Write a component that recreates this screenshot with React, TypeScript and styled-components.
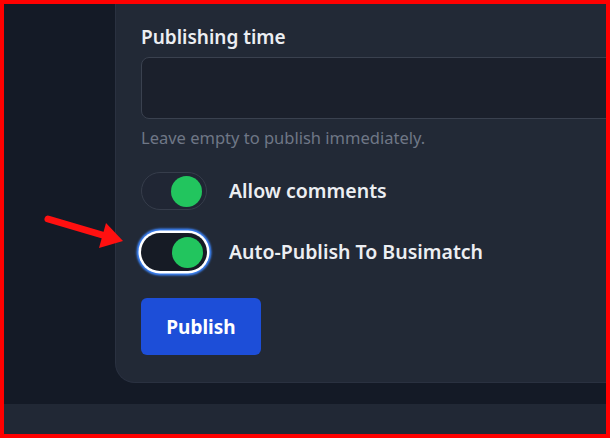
import React from "react";
import styled, { createGlobalStyle } from "styled-components";

const Global = createGlobalStyle`
  html, body { margin: 0; padding: 0; background: #141a26; }
  * { box-sizing: border-box; }
`;

const Frame = styled.div`
  position: relative;
  width: 610px;
  height: 438px;
  border: 4px solid #ff0000;
  background: #141a26;
  display: flex;
  flex-direction: column;
  overflow: hidden;
  font-family: "Noto Sans", "Open Sans", sans-serif;
`;

const Main = styled.div`
  flex: 1;
  display: flex;
  padding-left: 111px;
  padding-bottom: 21px;
  min-height: 0;
`;

const Card = styled.section`
  flex: 1;
  margin-right: -40px;
  background: #222936;
  border: 1px solid #2a3140;
  border-top: none;
  border-radius: 0 0 0 20px;
  padding: 21px 0 24px 25px;
  display: flex;
  flex-direction: column;
`;

const Label = styled.label`
  color: #eceef2;
  font-size: 19px;
  font-weight: 600;
  line-height: 24px;
`;

const Input = styled.input`
  margin-top: 8px;
  height: 62px;
  width: 100%;
  background: #1b202c;
  border: 1px solid #3a414f;
  border-radius: 8px;
  outline: none;
`;

const Help = styled.p`
  margin: 7px 0 0;
  color: #6f7786;
  font-size: 16.5px;
  line-height: 24px;
`;

const ToggleRow = styled.div<{ $top: number }>`
  margin-top: ${(p) => p.$top}px;
  display: flex;
  align-items: center;
  gap: 22px;
`;

const Track = styled.span<{ $focused?: boolean }>`
  width: 66px;
  height: 38px;
  border-radius: 19px;
  display: flex;
  align-items: center;
  justify-content: flex-end;
  padding-right: 4px;
  flex-shrink: 0;
  background: ${(p) => (p.$focused ? "#161b25" : "#202634")};
  border: ${(p) => (p.$focused ? "none" : "1px solid #363d4b")};
  box-shadow: ${(p) =>
    p.$focused
      ? "0 0 0 2.5px #ffffff, 0 0 2px 4.5px #3b82f6"
      : "none"};
`;

const Knob = styled.span`
  width: 31px;
  height: 31px;
  border-radius: 50%;
  background: #22c55e;
`;

const ToggleText = styled.span`
  color: #eceef2;
  font-size: 19.5px;
  font-weight: 600;
  line-height: 24px;
`;

const PublishButton = styled.button`
  margin-top: 27px;
  width: 120px;
  height: 57px;
  border: none;
  border-radius: 6px;
  background: #1d4ed8;
  color: #ffffff;
  font-family: inherit;
  font-size: 19px;
  font-weight: 700;
`;

const Footer = styled.div`
  height: 30px;
  background: #212835;
`;

const Arrow = styled.svg`
  position: absolute;
  left: 0;
  top: 0;
  pointer-events: none;
`;

export default function App() {
  return (
    <>
      <Global />
      <Frame>
        <Main>
          <Card>
            <Label>Publishing time</Label>
            <Input />
            <Help>Leave empty to publish immediately.</Help>
            <ToggleRow $top={22}>
              <Track>
                <Knob />
              </Track>
              <ToggleText>Allow comments</ToggleText>
            </ToggleRow>
            <ToggleRow $top={23}>
              <Track $focused>
                <Knob />
              </Track>
              <ToggleText>Auto-Publish To Busimatch</ToggleText>
            </ToggleRow>
            <PublishButton>Publish</PublishButton>
          </Card>
        </Main>
        <Footer />
        <Arrow width="610" height="438" viewBox="0 0 610 438">
          <line x1="44" y1="215" x2="100" y2="231.5" stroke="#ff1010" strokeWidth="7" strokeLinecap="round" />
          <polygon points="119,237 102,219 95,244" fill="#ff1010" />
        </Arrow>
      </Frame>
    </>
  );
}
